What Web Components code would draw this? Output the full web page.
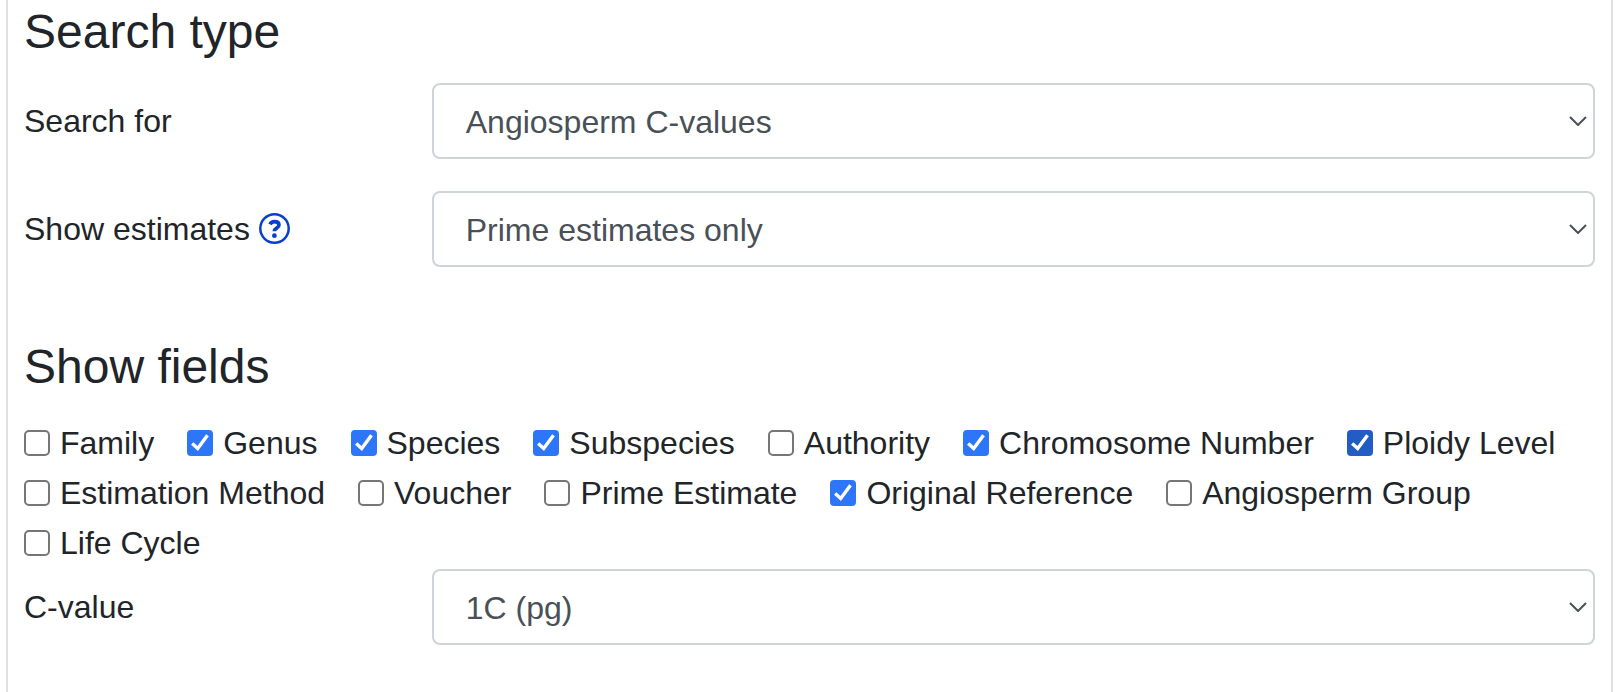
<!DOCTYPE html>
<html lang="en">
<head>
<meta charset="utf-8">
<meta name="viewport" content="width=device-width, initial-scale=1">
<title>Plant C-values search</title>
<style>
  body {
    margin: 0;
    background: #fff;
    color: #212529;
    font: 32px/48px "Liberation Sans", Arial, Helvetica, sans-serif;
  }
  select-row + select-row { margin-top: 32px; }
</style>
</head>
<body>
<search-panel>
  <form-section heading="Search type">
    <select-row options="Angiosperm C-values|Gymnosperm C-values|Pteridophyte C-values|Bryophyte C-values|Algae C-values">Search for</select-row>
    <select-row options="Prime estimates only|All estimates">Show estimates<help-link slot="help" topic="Help on estimates"></help-link></select-row>
  </form-section>
  <form-section heading="Show fields">
    <field-list>
      <field-check>Family</field-check>
      <field-check checked>Genus</field-check>
      <field-check checked>Species</field-check>
      <field-check checked>Subspecies</field-check>
      <field-check>Authority</field-check>
      <field-check checked>Chromosome Number</field-check>
      <field-check checked active>Ploidy Level</field-check>
      <field-check>Estimation Method</field-check>
      <field-check>Voucher</field-check>
      <field-check>Prime Estimate</field-check>
      <field-check checked>Original Reference</field-check>
      <field-check>Angiosperm Group</field-check>
      <field-check>Life Cycle</field-check>
    </field-list>
    <select-row options="1C (pg)|1C (Mbp)|2C (pg)|4C (pg)">C-value</select-row>
  </form-section>
</search-panel>

<script>
class ShadowElement extends HTMLElement {
  constructor() {
    super();
    this.attachShadow({ mode: "open" }).innerHTML = this.constructor.markup;
  }
}

/* Bordered card that holds the form sections */
class SearchPanel extends ShadowElement {
  static markup = `
    <style>
      :host {
        display: block;
        box-sizing: border-box;
        min-height: 100vh;
        margin: 0 11px 0 6px;
        padding: 3px 16px 0;
        border: solid #dee2e6;
        border-width: 0 2px;
      }
      form { display: flex; flex-direction: column; gap: 71px; }
    </style>
    <form><slot></slot></form>`;
}

/* Heading followed by rows */
class FormSection extends ShadowElement {
  static markup = `
    <style>
      :host { display: block; }
      h2 { margin: 0 0 22px; font-size: 48px; line-height: 58px; font-weight: 400; }
      .rows { display: flex; flex-direction: column; }
    </style>
    <h2></h2>
    <div class="rows"><slot></slot></div>`;
  connectedCallback() {
    this.shadowRoot.querySelector("h2").textContent = this.getAttribute("heading");
  }
}

/* Label in one column of four, drop-down across the other three */
class SelectRow extends ShadowElement {
  static markup = `
    <style>
      :host {
        display: grid;
        grid-template-columns: repeat(4, 1fr);
        column-gap: 60px;
        align-items: center;
      }
      .caption { display: flex; align-items: center; gap: 9px; white-space: nowrap; }
      .box { grid-column: span 3; display: grid; align-items: center; }
      select, svg { grid-area: 1 / 1; }
      select {
        appearance: none;
        box-sizing: border-box;
        width: 100%;
        height: 76px;
        margin: 0;
        padding: 2px 48px 0 32px;
        border: 2px solid #ced4da;
        border-radius: 8px;
        background: #fff;
        color: #495057;
        font: inherit;
      }
      svg {
        justify-self: end;
        margin-right: 8px;
        pointer-events: none;
        fill: none;
        stroke: #495057;
        stroke-width: 2;
      }
    </style>
    <div class="caption"><label for="choice"><slot></slot></label><slot name="help"></slot></div>
    <div class="box">
      <select id="choice"></select>
      <svg width="18" height="10" viewBox="0 0 18 10" aria-hidden="true"><path d="M1 1l8 8 8-8"/></svg>
    </div>`;
  connectedCallback() {
    const options = this.getAttribute("options").split("|").map(text => new Option(text));
    this.shadowRoot.querySelector("select").replaceChildren(...options);
  }
}

/* Circled question mark */
class HelpLink extends ShadowElement {
  static markup = `
    <style>
      :host { display: block; padding-bottom: 2px; }
      a { display: block; color: #0a3ed0; }
      svg { display: block; fill: none; stroke: currentColor; }
    </style>
    <a href="#help"><svg width="31" height="31" viewBox="0 0 31 31" aria-hidden="true"><circle cx="15.5" cy="15.5" r="14.2" stroke-width="2.5"/><path d="M11 11.4c.9-1.8 2.4-2.7 4.5-2.7 2.7 0 4.5 1.3 4.5 3.4 0 3.2-4.6 2.9-4.6 6.1" stroke-width="3.7"/><circle cx="15.4" cy="22.7" r="2.4" fill="currentColor" stroke="none"/></svg></a>`;
  connectedCallback() {
    this.shadowRoot.querySelector("a").setAttribute("aria-label", this.getAttribute("topic"));
  }
}

class FieldList extends ShadowElement {
  static markup = `
    <style>
      :host { display: flex; flex-wrap: wrap; column-gap: 33px; padding-bottom: 1px; }
    </style>
    <slot></slot>`;
}

/* Tick box with its label; "active" is the pressed or hovered shade */
class FieldCheck extends ShadowElement {
  static markup = `
    <style>
      :host { display: block; --tick: #2d76f9; }
      :host([active]), :host(:hover) { --tick: #225dc4; }
      label { display: flex; align-items: center; gap: 10px; line-height: 50px; white-space: nowrap; }
      .box { display: grid; }
      input, svg { grid-area: 1 / 1; }
      input {
        appearance: none;
        box-sizing: border-box;
        width: 26px;
        height: 26px;
        margin: 0;
        border: 2px solid #767676;
        border-radius: 5px;
        background: #fff;
      }
      input:checked { border-color: var(--tick); background: var(--tick); border-radius: 4px; }
      svg { display: none; pointer-events: none; fill: none; stroke: #fff; stroke-width: 3.4; }
      input:checked + svg { display: block; }
    </style>
    <label><span class="box"><input type="checkbox"><svg width="26" height="26" viewBox="0 0 26 26" aria-hidden="true"><path d="M5.2 13.4l5.5 5L20.5 5.2"/></svg></span><span><slot></slot></span></label>`;
  connectedCallback() {
    this.shadowRoot.querySelector("input").checked = this.hasAttribute("checked");
  }
}

customElements.define("search-panel", SearchPanel);
customElements.define("form-section", FormSection);
customElements.define("select-row", SelectRow);
customElements.define("help-link", HelpLink);
customElements.define("field-list", FieldList);
customElements.define("field-check", FieldCheck);
</script>
</body>
</html>
